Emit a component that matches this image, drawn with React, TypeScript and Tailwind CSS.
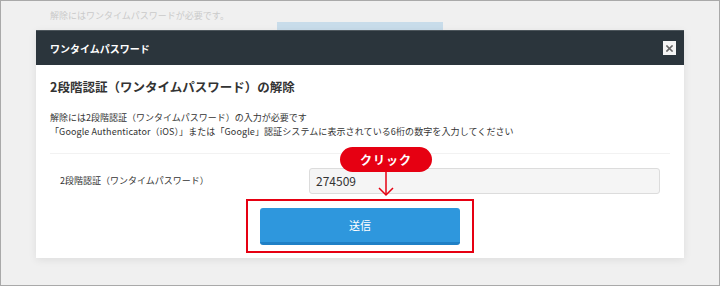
const jp = { fontFamily: '"Noto Sans CJK JP", "Noto Sans", sans-serif' };

function CloseButton() {
  return (
    <button
      type="button"
      aria-label="閉じる"
      className="flex h-[14px] w-[13px] items-center justify-center bg-[#f4f4f4]"
    >
      <svg width="7" height="7" viewBox="0 0 7 7">
        <path d="M1 1 L6 6 M6 1 L1 6" stroke="#666" strokeWidth="1.6" strokeLinecap="square" />
      </svg>
    </button>
  );
}

function ClickBadge() {
  return (
    <div className="absolute left-[31px] top-[-21px] flex flex-col items-center">
      <div className="flex h-[25px] w-[92px] items-center justify-center rounded-full bg-[#e60012] text-[12px] font-bold tracking-[1px] text-white">
        クリック
      </div>
      <svg width="20" height="26" viewBox="0 0 20 26" className="-mt-[1px]">
        <path d="M10 0 V24" stroke="#e60012" strokeWidth="1.5" />
        <path d="M3 17 L10 24 L17 17" stroke="#e60012" strokeWidth="1.5" fill="none" />
      </svg>
    </div>
  );
}

export default function App() {
  return (
    <div
      className="h-[286px] w-[720px] overflow-hidden border border-[#a9a9a9] bg-[#f0f0f0] text-[#333]"
      style={jp}
    >
      <p className="ml-[49px] mt-[9px] h-[12px] text-[9px] leading-[12px] text-[#cacaca]">
        解除にはワンタイムパスワードが必要です。
      </p>
      <div className="ml-[276px] h-[8px] w-[166px] bg-[#c8dcea]" />

      <div className="ml-[35px] w-[648px] bg-white shadow-[0_2px_8px_rgba(0,0,0,0.08)]">
        <div className="flex h-[35px] items-center justify-between border-t border-[#4d565c] bg-[#2b353c] pl-[14px] pr-[8px]">
          <h1 className="text-[10px] font-bold text-white">ワンタイムパスワード</h1>
          <CloseButton />
        </div>

        <div className="px-[14px] pb-[5px]">
          <h2 className="pt-[12px] text-[12.5px] font-bold leading-[20px] text-[#333]">
            2段階認証（ワンタイムパスワード）の解除
          </h2>
          <div className="mt-[14px] text-[9px] leading-[14px] text-[#333]">
            <p>解除には2段階認証（ワンタイムパスワード）の入力が必要です</p>
            <p className="tracking-[0.1px]">
              「Google Authenticator（iOS）」または「Google」認証システムに表示されている6桁の数字を入力してください
            </p>
          </div>

          <div className="mt-[14px] border-t border-[#f2f2f2]" />

          <div className="mt-[14px] flex items-center">
            <span className="w-[259px] pl-[10px] text-[9px]">2段階認証（ワンタイムパスワード）</span>
            <div className="relative">
              <div className="flex h-[26px] w-[351px] items-center rounded-[3px] border border-[#dcdcdc] bg-[#f5f5f5] px-[6px] text-[12px]">
                274509
              </div>
              <ClickBadge />
            </div>
          </div>

          <div className="mt-[5px] flex justify-center">
            <div className="border-2 border-[#e60012] px-[12px] pb-[6px] pt-[7px]">
              <button
                type="button"
                className="h-[37px] w-[200px] rounded-[3px] border-b-[3px] border-[#1f80c6] bg-[#2e97dd] text-[11px] text-white"
              >
                送信
              </button>
            </div>
          </div>
        </div>
      </div>
    </div>
  );
}
